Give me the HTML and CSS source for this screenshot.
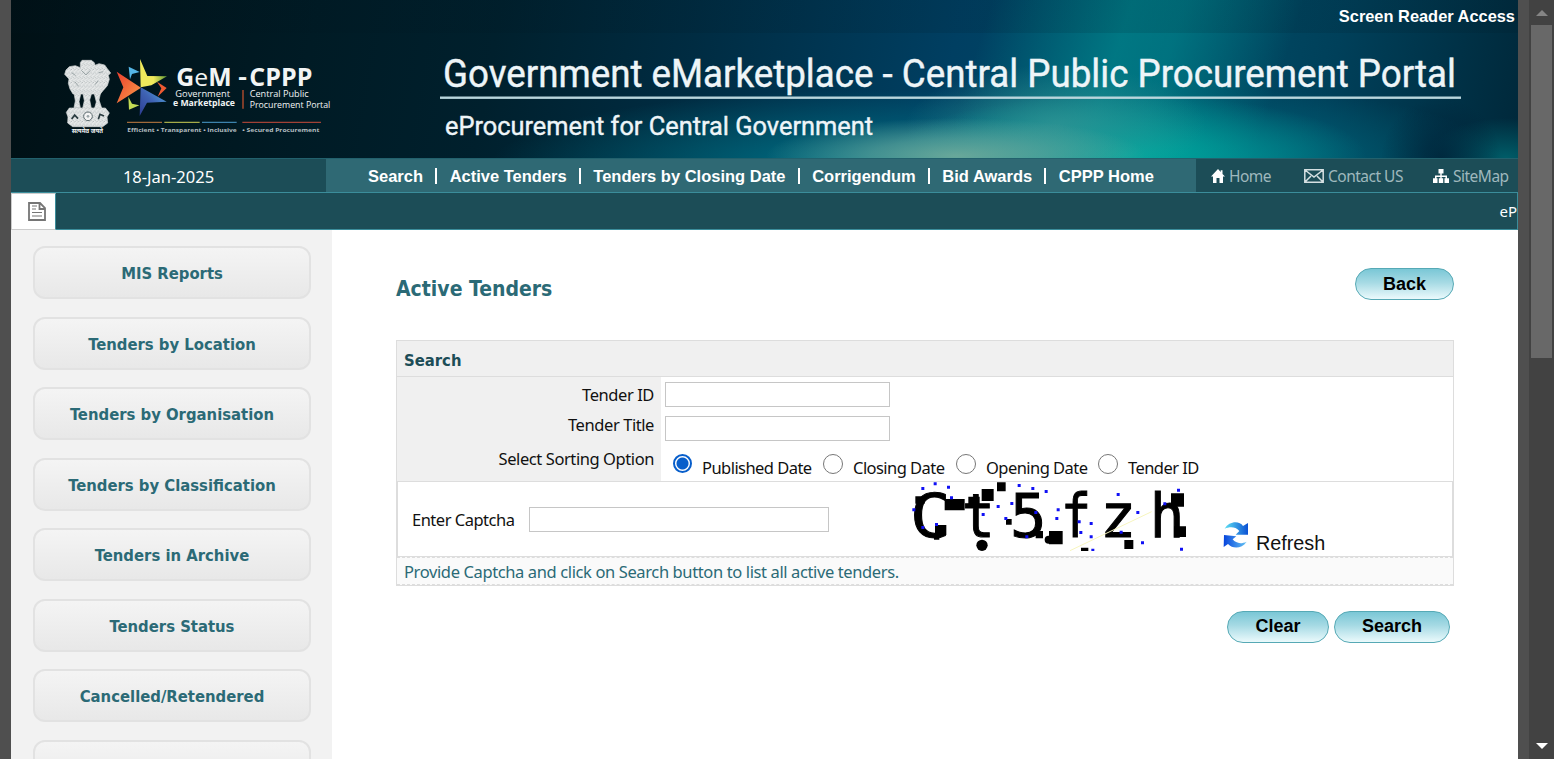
FILE: index.html
```html
<!DOCTYPE html>
<html lang="en">
<head>
<meta charset="utf-8">
<title>Active Tenders</title>
<link rel="stylesheet" href="styles.css">
</head>
<body>
<div class="frame">
  <main class="page">
    <header class="banner">
      <a class="reader">Screen Reader Access</a>
      <div class="brand">
        <svg class="logo" width="290" height="95" viewBox="0 0 870 285">
          <defs>
            <linearGradient id="or" x1="0" y1="0" x2="1" y2="1"><stop offset="0" stop-color="#ec3d2c"/><stop offset="1" stop-color="#f9a04b"/></linearGradient>
            <linearGradient id="ye" x1="0" y1="0" x2="1" y2="0"><stop offset=".5" stop-color="#f0e95c"/><stop offset="1" stop-color="#5e9a35"/></linearGradient>
            <linearGradient id="bl" x1="0" y1="1" x2="1" y2="0"><stop offset="0" stop-color="#2c3c91"/><stop offset=".5" stop-color="#3f63b4"/><stop offset="1" stop-color="#56b5e5"/></linearGradient>
            <pattern id="grain" width="11" height="13" patternUnits="userSpaceOnUse"><rect width="11" height="13" fill="#e8eaea"/><path d="M1 2l4 3M7 9l3-4M2 11h2M9 1l1 1" stroke="#879193" stroke-width="1.800"/></pattern>
          </defs>
          <g fill="url(#grain)" stroke="#d4d8d8" stroke-width="2">
            <path d="M91 38l5-7h28l9 7 2 8 12-5 17 4 8 11 10 13-7 7 3 12-6 19-13 15-8 10H69l-9-15-5-17 2-13-13-14 4-13 10-10 18-3 15 6z"/>
            <path d="M72 128h21l-6 27 4 18H72l4-20zM98 126h28l-7 24 5 25H98l5-23zM132 128h20l-5 22 8 24h-21l5-18z"/>
            <path d="M58 174h108l12 15-7 12 2 18-15 11H68l-15-11 1-18-5-14z"/>
          </g>
          <path d="M94 61l14 14 13-14M65 68l12 9M146 68l14-3M74 95l12 14M135 104l9-12" fill="none" stroke="#9aa4a6" stroke-width="3"/>
          <circle cx="114" cy="199" r="13" fill="#f4f4f4" stroke="#59686c" stroke-width="3"/><circle cx="114" cy="199" r="4" fill="#9aa5a8"/>
          <path d="M65 207l9-12 10 11M145 208l5-15 12 5" fill="none" stroke="#2a3b40" stroke-width="5"/>
          <text x="65" y="249" textLength="94" lengthAdjust="spacingAndGlyphs" class="lt" font-size="18" font-weight="700">सत्यमेव जयते</text>
          <path d="M236 50L269 66 246 72 240 88z" fill="#55b5e5"/>
          <path d="M321 95L350 114 323 140 334 115z" fill="#ed5a32"/>
          <path d="M235 140L246 161 268 166 237 179z" fill="#c3dc54"/>
          <path d="M200 65L273 113 200 160 220 112z" fill="url(#or)"/>
          <path d="M270 27L292 78 351 79 304 106 272 112z" fill="url(#ye)"/>
          <path d="M272 112L350 155 291 158 269 198z" fill="url(#bl)"/>
          <text x="379" y="109" class="lt" font-size="73" textLength="166" lengthAdjust="spacingAndGlyphs"><tspan font-weight="700">G</tspan>e<tspan font-weight="700">M</tspan></text>
          <text x="565" y="105" class="lt" font-size="70" font-weight="700" textLength="26" lengthAdjust="spacingAndGlyphs">-</text>
          <text x="598" y="109" class="lt" font-size="74" font-weight="700" textLength="189" lengthAdjust="spacingAndGlyphs">CPPP</text>
          <text x="376" y="140" class="lt" font-size="28" textLength="164" lengthAdjust="spacingAndGlyphs">Government</text>
          <text x="369" y="168" class="lt" font-size="27" font-weight="700" textLength="186" lengthAdjust="spacingAndGlyphs">e Marketplace</text>
          <path d="M579 120v56" stroke="#d6572f" stroke-width="3.500"/>
          <text x="599" y="142" class="lt" font-size="27" textLength="177" lengthAdjust="spacingAndGlyphs">Central Public</text>
          <text x="599" y="173" class="lt" font-size="27" textLength="242" lengthAdjust="spacingAndGlyphs">Procurement Portal</text>
          <path d="M231 217h105" stroke="#a06a3a" stroke-width="4"/><path d="M343 217h106" stroke="#a5ab48" stroke-width="4"/><path d="M456 217h104" stroke="#3c83ad" stroke-width="4"/><path d="M577 217h236" stroke="#a24136" stroke-width="4"/>
          <text x="232" y="246" class="lt dim" font-size="17" font-weight="700" textLength="328" lengthAdjust="spacingAndGlyphs">Efficient • Transparent • Inclusive</text>
          <text x="577" y="246" class="lt dim" font-size="17" font-weight="700" textLength="231" lengthAdjust="spacingAndGlyphs">• Secured Procurement</text>
        </svg>
        <svg class="titles" width="1026" height="95" viewBox="0 0 1026 95">
          <text x="3" y="37" class="tt" font-size="38" textLength="1013" lengthAdjust="spacingAndGlyphs">Government eMarketplace - Central Public Procurement Portal</text>
          <rect x="0" y="46.500" width="1021" height="2.400" fill="#b9d5dc"/>
          <text x="5" y="85" class="tt" font-size="26" textLength="428" lengthAdjust="spacingAndGlyphs">eProcurement for Central Government</text>
        </svg>
      </div>
    </header>

    <nav class="bar">
      <div class="date"><span>18-Jan-2025</span></div>
      <div class="links">
        <a>Search</a><i></i><a>Active Tenders</a><i></i><a>Tenders by Closing Date</a><i></i><a>Corrigendum</a><i></i><a>Bid Awards</a><i></i><a>CPPP Home</a>
      </div>
      <div class="quick">
        <svg width="14" height="14" viewBox="0 0 14 14"><path d="M7 0L0 7.500h2V14h3.500V9h3v5H12V7.500h2L11.500 5V1.200H9.700v1.700z" fill="#fff"/></svg>
        <span class="q1">Home</span>
        <svg class="mail" width="20" height="14" viewBox="0 0 20 14" fill="none" stroke="#d5e0e2" stroke-width="1.500"><path d="M.8.8h18.400v12.400H.8zM1 1l9 7 9-7M1 13l6-6M19 13l-6-6"/></svg>
        <span class="q2">Contact US</span>
        <svg class="map" width="16" height="14" viewBox="0 0 16 14" fill="#fff"><path d="M5.500 0h5v4.500H8.700v2H14v2.700h2V14h-4.500V9.200h1V8H8.700v1.200h1.500V14H5.800V9.200h1.500V8H3.500v1.200h1V14H0V9.200h2V6.500h5.300v-2H5.500z"/></svg>
        <span class="q3">SiteMap</span>
      </div>
    </nav>

    <div class="ticker">
      <div class="doc">
        <svg width="18" height="19" viewBox="0 0 18 19" fill="none" stroke="#757575" stroke-width="1.800"><path d="M1 1h11l5 5v12H1zM11.500 1v6H17"/><path d="M4 4h5M4 7h4M4 10.500h10M4 14h10" stroke-width="1.200"/></svg>
      </div>
      <span>eP</span>
    </div>

    <div class="body">
      <aside class="side">
        <a><span>MIS Reports</span></a>
        <a><span>Tenders by Location</span></a>
        <a><span>Tenders by Organisation</span></a>
        <a><span>Tenders by Classification</span></a>
        <a><span>Tenders in Archive</span></a>
        <a><span>Tenders Status</span></a>
        <a><span>Cancelled/Retendered</span></a>
        <a><span></span></a>
      </aside>

      <section class="content">
        <div class="top">
          <h1>Active Tenders</h1>
          <button class="pill back">Back</button>
        </div>
        <div class="panel">
          <h2>Search</h2>
          <div class="fields">
            <div class="labels"><label>Tender ID</label><label>Tender Title</label><label>Select Sorting Option</label></div>
            <div class="values">
              <input class="in" type="text"><input class="in" type="text">
              <div class="radios">
                <b class="on"></b><span class="r1">Published Date</span>
                <b></b><span class="r2">Closing Date</span>
                <b></b><span class="r3">Opening Date</span>
                <b></b><span class="r4">Tender ID</span>
              </div>
            </div>
          </div>
          <div class="captcha">
            <label>Enter Captcha</label>
            <input class="in wide" type="text">
            <svg class="code" width="284" height="69" viewBox="30 19 852 207">
              <g class="cc" font-size="182">
                <text x="30" y="184" textLength="122" lengthAdjust="spacingAndGlyphs">C</text><text x="186" y="184" textLength="98" lengthAdjust="spacingAndGlyphs">t</text><text x="330" y="184">5</text><text x="483" y="184" textLength="90" lengthAdjust="spacingAndGlyphs">f</text><text x="599" y="184">z</text><text x="749" y="184" textLength="104" lengthAdjust="spacingAndGlyphs">h</text>
              </g>
              <g>
                <path d="M46 62h28v22H46zM134 70h60v34h-60zM105 148h34v30h-34zM102 172h16v20h-16zM205 63h34v34h-34zM245 40h36v36h-36zM291 20h26v27h-26zM318 130h17v17h-17zM407 166h22v22h-22zM447 166h41v40h-41zM673 193h27v27h-27zM543 216h22v10h-22zM813 53h39v40h-39zM822 152h36v32h-36z"/>
                <circle cx="246" cy="209" r="17"/><circle cx="446" cy="192" r="12"/>
              </g>
              <path d="M510 225L755 108" stroke="#f7f5be" stroke-width="3"/>
              <path fill="#1010f5" d="M64 34h9v9h-9zM101 20h9v9h-9zM141 30h9v9h-9zM150 62h9v9h-9zM37 98h9v9h-9zM64 151h9v9h-9zM105 142h9v9h-9zM245 112h9v9h-9zM290 88h9v9h-9zM331 79h9v9h-9zM313 124h9v9h-9zM353 25h9v9h-9zM394 34h9v9h-9zM434 43h9v9h-9zM470 98h9v9h-9zM466 124h9v9h-9zM403 106h9v9h-9zM376 179h9v9h-9zM533 134h9v9h-9zM569 139h9v9h-9zM538 166h9v9h-9zM569 179h9v9h-9zM574 219h9v7h-9zM650 52h9v9h-9zM709 106h9v9h-9zM659 165h9v9h-9zM723 197h9v9h-9zM790 80h9v9h-9zM831 39h9v9h-9zM840 216h9v9h-9z"/>
            </svg>
            <a class="refresh">
              <svg width="26" height="28" viewBox="0 0 78 84">
                <defs><linearGradient id="ra"><stop offset="0" stop-color="#5de0f3"/><stop offset="1" stop-color="#0b51d4"/></linearGradient><linearGradient id="rb"><stop offset="0" stop-color="#0644dc"/><stop offset="1" stop-color="#65c4f5"/></linearGradient></defs>
                <path d="M5 23C18 0 49-2 60 15l15-9v35H38l11-11C37 16 20 17 5 23z" fill="url(#ra)"/>
                <path d="M3 42l37 4-11 9c10 12 24 15 42 7C55 85 29 84 15 69L2 78z" fill="url(#rb)"/>
              </svg>
              <span>Refresh</span>
            </a>
          </div>
          <p class="hint"><span>Provide Captcha and click on Search button to list all active tenders.</span></p>
        </div>
        <div class="actions">
          <button class="pill clear">Clear</button><button class="pill find">Search</button>
        </div>
      </section>
    </div>
  </main>
  <div class="scroll">
    <svg width="25" height="25" viewBox="0 0 25 25"><path d="M7 16l6-6 6 6z" fill="#858585"/></svg>
    <div class="thumb"></div>
    <svg class="down" width="25" height="25" viewBox="0 0 25 25"><path d="M7 9l6 6 6-6z" fill="#fff"/></svg>
  </div>
</div>
</body>
</html>
```
FILE: styles.css
```css
* { box-sizing: border-box; }
body { margin: 0; overflow: hidden; background: #4f4f4f; font: 16.5px "Noto Sans", "Open Sans", sans-serif; color: #111; }
.frame { display: flex; width: 1554px; height: 759px; padding-left: 11px; }
.page { width: 1507px; height: 759px; overflow: hidden; background: #fff; }

.banner {
  height: 158px;
  display: flex;
  flex-direction: column;
  background:
    linear-gradient(rgba(0, 20, 30, .12), rgba(0, 20, 30, .12)) 0 0 / 100% 33px no-repeat,
    radial-gradient(ellipse 60px 60px at 1430px 158px, rgba(0, 30, 52, .7), transparent),
    radial-gradient(ellipse 80px 40px at 1495px 158px, rgba(0, 105, 115, .8), transparent),
    radial-gradient(ellipse 190px 38px at 945px 156px, rgba(110, 170, 155, .95), rgba(100, 165, 155, .65) 45%, transparent),
    radial-gradient(ellipse 150px 60px at 1045px 125px, rgba(55, 148, 148, .75), transparent),
    radial-gradient(ellipse 240px 60px at 1115px 155px, rgba(0, 172, 160, .95), transparent),
    linear-gradient(108deg, transparent 63%, rgba(0, 138, 143, .7) 72%, rgba(0, 138, 143, .6) 75.5%, transparent 83%),
    radial-gradient(ellipse 380px 75px at 860px 165px, rgba(0, 122, 140, .85), transparent),
    radial-gradient(ellipse 260px 70px at 1230px 160px, rgba(0, 110, 130, .8), transparent),
    linear-gradient(100deg, #001015 0, #001b25 20%, #00202d 32%, #002c42 45%, #003f62 62%, #004e68 76%, #00405a 87%, #00283a 100%);
}
.reader { height: 33px; padding: 7px 3px 0 0; text-align: right; color: #fff; font: bold 16.4px/19px "Liberation Sans", Arial, sans-serif; }
.brand { display: flex; padding: 17px 0 0 39px; gap: 100px; }
.titles { overflow: visible; }
.lt { font-family: "Open Sans", "Noto Sans", sans-serif; fill: #f2f5f5; }
.dim { fill: #b4bec1; }
.tt { font-family: Roboto, sans-serif; fill: #eef5f8; stroke: #eef5f8; stroke-width: .4px; }

.bar { display: flex; height: 35px; border-top: 1px solid #22616d; border-bottom: 1px solid #3b8d9b; background: #1c4d57; }
.date { width: 315px; padding-top: 1px; display: flex; justify-content: center; align-items: center; color: #fff; }
.links { width: 870px; display: flex; align-items: center; padding: 1px 0 0 42px; background: #2f6974; color: #fff; font: bold 16.5px "Liberation Sans", Arial, sans-serif; white-space: nowrap; }
.links i { width: 2px; height: 16px; margin: 0 12.3px; background: #fff; }
.quick { flex: 1; display: flex; align-items: center; padding-left: 15px; color: #9fb8bd; font-size: 15.500px; letter-spacing: -.5px; white-space: nowrap; }
.quick span { padding-left: 4px; }
.q1 { width: 79px; }
.q2 { width: 109px; }

.ticker { display: flex; justify-content: space-between; height: 37px; border-right: 1px solid #3b8d9b; border-bottom: 1px solid #3b8d9b; background: #1c4d57; color: #fff; font-size: 15px; }
.ticker > span { line-height: 37px; }
.doc { width: 45px; height: 37px; padding: 0 0 1px 6px; display: flex; align-items: center; justify-content: center; background: #fff; border: 1px solid #ccc; border-right-color: #3b8d9b; }

.body { display: flex; height: 529px; }
.side { width: 321px; display: flex; flex-direction: column; gap: 17.500px; padding: 16px 21px 0 22px; background: #f2f2f2; overflow: hidden; }
.side a { flex: none; display: flex; justify-content: center; align-items: center; height: 53px; padding-top: 2px; border: 2px solid #e2e2e2; border-radius: 12px; background: linear-gradient(#f4f4f4, #e8e8e8); color: #2b6a76; font: bold 16.5px "DejaVu Sans Condensed", "DejaVu Sans", sans-serif; }

.content { width: 1122px; margin-left: 64px; }
.top { display: flex; justify-content: space-between; height: 76px; padding: 38px 64px 0 0; }
h1 { margin: 0; padding-top: 7px; font: bold 21px/28px "DejaVu Sans Condensed", "DejaVu Sans", sans-serif; color: #2b6a76; }
.pill { height: 32px; padding: 0 0 1px; border: 1px solid #56a9b5; border-radius: 16px; background: linear-gradient(#7ac7d6, #a6dae4 45%, #ebfafc); font: bold 18px "Liberation Sans", Arial, sans-serif; color: #000; }
.back { width: 99px; padding: 1px 0 0; }
.clear { width: 102px; }
.find { width: 116px; }
.panel { width: 1058px; height: 246px; margin-top: 34px; border: 1px solid #ddd; }
h2 { margin: 0; height: 36px; padding: 1px 7px 0; border-bottom: 1px solid #ddd; background: #f0f0f0; font: bold 16.5px/37px "DejaVu Sans Condensed", "DejaVu Sans", sans-serif; color: #1c4d57; }
.fields { display: flex; height: 104px; }
.labels { width: 264px; padding: 3px 7px 0 0; display: flex; flex-direction: column; align-items: flex-end; background: #f0f0f0; letter-spacing: -.42px; }
.labels label { height: 30px; line-height: 30px; }
.labels label:last-child { margin-top: 4px; }
.values { padding: 5px 0 0 4px; display: flex; flex-direction: column; gap: 9px; }
.in { flex: none; width: 225px; height: 25px; padding: 0; border: 1px solid #c6c6c6; background: #fff; }
.radios { display: flex; flex: none; height: 27px; margin-top: 4px; padding-left: 8px; letter-spacing: -.55px; white-space: nowrap; }
.radios b { flex: none; width: 20px; height: 20px; border: 1.500px solid #777; border-radius: 50%; }
.radios b.on { border: 2px solid #075ecb; background: radial-gradient(circle, #075ecb 5.500px, #fff 6.500px); width: 19px; height: 19px; }
.radios span { flex: none; padding-left: 10px; line-height: 27px; }
.r1 { width: 131px; }
.r2 { width: 113px; }
.r3 { width: 122px; }
.captcha { display: flex; height: 76px; border: 1px solid #ddd; }
.captcha label { width: 117px; margin-left: 14px; padding-top: 26px; line-height: 24px; letter-spacing: -.5px; }
.wide { width: 300px; margin-top: 25px; }
.code { margin: 0 0 0 81px; }
.cc { font-family: "DejaVu Sans Mono", monospace; fill: #000; stroke: #000; stroke-width: 3px; }
.refresh { display: flex; margin: 39px 0 0 29px; gap: 7px; font: 19.8px/44px "Liberation Sans", Arial, sans-serif; }
.hint { margin: 0; height: 28px; padding-left: 7px; border-top: 1px dashed #ddd; border-bottom: 1px dashed #ddd; background: #fafafa; color: #2b6a76; line-height: 28px; letter-spacing: -.38px; }
.actions { display: flex; justify-content: flex-end; gap: 5px; padding: 25px 68px 0 0; }

.scroll { width: 25px; height: 759px; margin-left: 11px; background: #424242; display: flex; flex-direction: column; }
.thumb { width: 21px; height: 333px; margin-left: 2px; background: #686868; }
.down { margin-top: auto; }
```
